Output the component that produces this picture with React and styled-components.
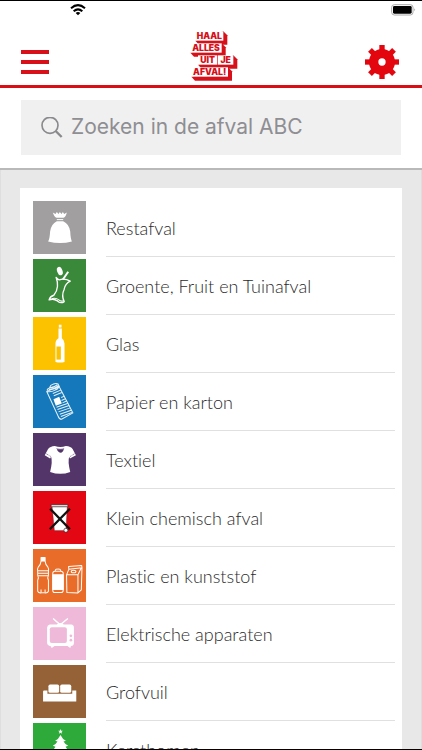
import { useState } from 'react';
import styled, { createGlobalStyle } from 'styled-components';

const GlobalStyle = createGlobalStyle`
    * {
        box-sizing: border-box;
    }

    body {
        margin: 0;
        background-color: #fff;
        font-family: Lato, 'Open Sans', sans-serif;
    }
`

const Screen = styled.div`
    display: flex;
    flex-direction: column;
    height: 100vh;
    border-top: 1px solid #000;
    border-bottom: 1px solid #000;
    overflow: hidden;
`;

const StatusBar = styled.div`
    display: flex;
    flex-shrink: 0;
    justify-content: space-between;
    padding: 3px 6px 0 70px;
`;

const Header = styled.header`
    display: grid;
    flex-shrink: 0;
    grid-template-columns: 1fr auto 1fr;
    align-items: end;
    padding: 12px 23px 4px 21px;
    border-bottom: 3px solid #d81016;
`;

const IconButton = styled.button`
    display: flex;
    align-items: center;
    justify-self: ${({ $side }) => $side};
    height: 38px;
    padding: 0;
    border: 0;
    background: none;
    color: #e3060e;
    cursor: pointer;
`;

const Bars = styled.span`
    display: flex;
    align-items: center;
    width: 28px;
    height: 24px;
    border-top: 4px solid #d8101a;
    border-bottom: 4px solid #d8101a;

    &::before {
        content: '';
        width: 100%;
        height: 4px;
        background-color: #d8101a;
    }
`;

const LogoText = styled.text`
    font-family: Inter, sans-serif;
    font-size: 26px;
    font-weight: 900;
    fill: #d8101a;
`;

const SearchBar = styled.form`
    flex-shrink: 0;
    padding: 12px 21px 13px;
    border-bottom: 2px solid #b9b9b9;
`;

const SearchField = styled.label`
    display: flex;
    align-items: center;
    gap: 8px;
    height: 55px;
    padding: 0 20px;
    background-color: #f0f0f0;
    color: #8a8a8e;
`;

const SearchInput = styled.input`
    flex: 1;
    min-width: 0;
    padding: 0 0 2px;
    border: 0;
    outline: 0;
    background: none;
    color: #333;
    font-family: Inter, sans-serif;
    font-size: 21px;

    &::placeholder {
        color: #8e8e93;
        opacity: 1;
    }
`;

const Content = styled.main`
    flex: 1;
    min-height: 0;
    padding: 18px 19px;
    border-right: 1px solid #dedede;
    border-left: 1px solid #dedede;
    background-color: #e8e8e8;
    overflow-y: auto;
    scrollbar-width: none;
`;

const List = styled.ul`
    margin: 0;
    padding: 13px 7px 13px 13px;
    background-color: #fff;
    list-style: none;
`;

const Row = styled.a`
    display: flex;
    gap: 20px;
    height: 58px;
    color: #2b2b2b;
    text-decoration: none;
`;

const Tile = styled.span`
    flex-shrink: 0;
    width: 53px;
    height: 53px;
    background-color: ${({ $color }) => $color};

    svg {
        display: block;
        width: 100%;
        height: 100%;
    }
`;

const Name = styled.span`
    flex: 1;
    height: 56px;
    border-bottom: 1px solid #e0e0e0;
    font-size: 18px;
    font-variant-ligatures: none;
    font-weight: 300;
    line-height: 54px;
`;

const Wifi = () => (
    <svg width="16" height="12" viewBox="0 0 48 36" fill="none" stroke="#000" strokeWidth="6">
        <path d="M3 13 Q24 -6 45 13" />
        <path d="M11 22 Q24 10 37 22" />
        <path d="M17 27 Q24 21 31 27 L24 34 Z" fill="#000" stroke="none" />
    </svg>
)

const Battery = () => (
    <svg width="25" height="12" viewBox="0 0 75 36">
        <rect x="2" y="2" width="64" height="31" rx="8" fill="#fff" stroke="#aaa" strokeWidth="3" />
        <rect x="6" y="6" width="56" height="23" rx="4" fill="#000" />
        <path d="M70 13 Q75 17 70 22 Z" fill="#999" />
    </svg>
)

const logoLines = [
    { text: 'HAAL', x: 76, y: 94, w: 84 },
    { text: 'ALLES', x: 61, y: 130, w: 94 },
    { text: 'UIT', x: 84, y: 166, w: 58 },
    { text: 'JE', x: 144, y: 166, w: 46 },
    { text: 'AFVAL!', x: 64, y: 202, w: 110 },
]

const Logo = () => (
    <svg width="56" height="53" viewBox="36 84 168 159" role="img" aria-label="Haal alles uit je afval!">
        {logoLines.map(({ text, x, y, w }) => (
            <g key={text}>
                <path d={`M${x} ${y + 28} L${x + 11} ${y + 40} H${x + w + 12} V${y + 12} L${x + w} ${y} Z`} fill="#d8101a" />
                <rect x={x} y={y} width={w} height="28" fill="#fff" />
                <LogoText x={x + w / 2} y={y + 23} textAnchor="middle">{text}</LogoText>
            </g>
        ))}
    </svg>
)

const Gear = () => (
    <svg width="34" height="34" viewBox="-51 -51 102 102" fill="currentColor">
        {[0, 45, 90, 135, 180, 225, 270, 315].map((angle) => (
            <path key={angle} d="M-8 -51 H8 V-34 H-8 Z" transform={`rotate(${angle})`} />
        ))}
        <path fillRule="evenodd" d="M0 -39 A39 39 0 1 1 0 39 A39 39 0 1 1 0 -39 Z M0 -11 A11 11 0 1 0 0 11 A11 11 0 1 0 0 -11 Z" />
    </svg>
)

const Magnifier = () => (
    <svg width="22" height="22" viewBox="0 0 66 66" fill="none" stroke="currentColor">
        <circle cx="27" cy="25" r="24" strokeWidth="5" />
        <path d="M44 42 L62 60" strokeWidth="7" />
    </svg>
)

const GarbageBag = () => (
    <svg viewBox="0 0 158 158" fill="#fff">
        <path d="M59 34 L67 39 L71 33 L76 39 L80 33 L85 39 L89 33 L93 39 L101 34 Q97 48 91 50 H70 Q64 48 59 34 Z" />
        <path d="M71 54 H90 V57 H71 Z" />
        <path d="M71 60 H90 Q108 68 111 91 Q112 112 116 121 Q81 130 45 121 Q50 112 51 91 Q54 68 71 60 Z" />
    </svg>
)

const AppleCore = () => (
    <svg viewBox="0 0 158 158" fill="none" stroke="#fff" strokeWidth="4" strokeLinejoin="round">
        <ellipse cx="80" cy="36" rx="8" ry="13" fill="#fff" stroke="none" transform="rotate(-20 80 36)" />
        <path d="M89 61 L105 38" strokeWidth="6" />
        <path d="M69 55 Q75 65 84 61 Q96 58 111 66 Q96 73 93 90 Q84 109 93 127 Q83 134 73 125 Q61 117 48 122 Q51 111 62 108 Q72 96 73 81 Q74 68 69 55 Z" />
        <path d="M53 121 Q65 113 77 122 Q84 128 91 124" strokeWidth="3" />
    </svg>
)

const Bottle = () => (
    <svg viewBox="0 0 158 158">
        <path fill="#fff" d="M77 23 H85 V31 H77 Z M76 34 H86 V63 Q94 68 94 79 V134 Q81 138 67 134 V79 Q67 68 76 63 Z" />
        <path fill="#fcc200" d="M70 88 H83 V127 H70 Z" />
    </svg>
)

const Newspaper = () => (
    <svg viewBox="0 0 158 158" fill="none" stroke="#e6f1f8" strokeWidth="3">
        <path d="M41 49 Q53 52 66 45 Q76 42 77 33 L119 113 L85 132 Q78 132 75 123 Z" strokeLinejoin="round" />
        <path d="M43 47 Q40 43 49 39 L53 31 Q66 23 75 27 L78 34 Q73 40 61 42 Q49 45 43 49 M50 38 Q61 38 73 29 M47 43 Q61 43 76 32" />
        <path d="M59 55 L83 45 M62 62 L86 52 M85 76 L98 70 M88 83 L101 77 M70 96 L105 84 M73 103 L108 91 M76 110 L111 98 M80 117 L114 105 M83 124 L116 112 M84 67 L94 63" />
        <path d="M61 72 L78 65 L86 85 L68 92 Z" fill="#fff" stroke="none" />
    </svg>
)

const Shirt = () => (
    <svg viewBox="0 0 158 158">
        <path fill="#fff" d="M65 39 Q82 44 98 39 Q113 40 118 48 L128 66 L110 76 L108 71 Q103 84 111 116 Q82 127 51 116 Q59 85 54 71 L51 76 L35 66 L45 48 Q51 40 65 39 Z" />
        <path fill="#54356a" d="M70 45 Q82 49 93 45 Q90 59 82 59 Q73 58 70 45 Z" />
        <path fill="none" stroke="#54356a" strokeWidth="2" strokeDasharray="3 2" d="M38 61 L53 70 M111 70 L125 61" />
        <path fill="none" stroke="#fff" strokeWidth="2" d="M71 47 H92" />
    </svg>
)

const CrossedBin = () => (
    <svg viewBox="0 0 158 158">
        <path fill="#fff" stroke="#333" strokeWidth="1" d="M57 46 H102 L98 118 H64 Z" />
        <path fill="#fff" stroke="#222" strokeWidth="2" d="M54 41 H104 V47 H54 Z" />
        <path fill="none" stroke="#111" strokeWidth="7" d="M51 53 L110 114 M110 53 L50 114" />
        <circle cx="98" cy="117" r="6" fill="#fff" stroke="#222" strokeWidth="2" />
    </svg>
)

const Packaging = () => (
    <svg viewBox="0 0 158 158" fill="none" stroke="#fff" strokeWidth="3" strokeLinejoin="round">
        <path d="M24 25 H36 V34 H24 Z" fill="#fff" />
        <path d="M24 36 Q23 46 16 53 Q12 59 14 68 V79 Q18 85 14 93 V126 Q17 134 30 130 Q43 134 46 126 V93 Q42 85 46 79 V68 Q48 59 44 53 Q37 46 36 36 Z M14 65 H46 M14 72 H46 M15 80 H45 M24 130 V121 M36 130 V121" />
        <path d="M59 72 Q59 66 65 66 H83 Q90 66 90 72 V123 Q90 130 83 130 H65 Q59 130 59 123 Z" />
        <path d="M59 77 H90 V121 H59 Z" fill="#fff" />
        <path d="M66 65 Q67 59 74 60 Q82 59 83 65" />
        <path d="M106 52 L145 49 L146 56 L107 60 Z M107 60 L100 77 L101 130 L134 131 L144 122 L146 56 M100 77 H134 V131 M134 77 L144 56" />
        <ellipse cx="121" cy="67" rx="7" ry="4" />
    </svg>
)

const Television = () => (
    <svg viewBox="0 0 158 158">
        <path fill="none" stroke="#fff" strokeWidth="4" d="M60 34 L81 53 L104 34" />
        <path fill="#fff" d="M70 53 Q81 43 93 53 Z M50 52 H114 Q122 53 122 61 V107 Q122 116 113 116 L111 122 L103 116 H64 L56 122 L52 116 Q43 115 42 107 V61 Q43 53 50 52 Z" />
        <rect x="50" y="60" width="51" height="47" rx="6" fill="#efbada" />
        <circle cx="113" cy="86" r="4" fill="#efbada" />
        <circle cx="113" cy="99" r="4" fill="#efbada" />
    </svg>
)

const Sofa = () => (
    <svg viewBox="0 0 158 158" fill="#fff">
        <rect x="46" y="58" width="32" height="25" rx="5" />
        <rect x="81" y="58" width="33" height="25" rx="5" />
        <path d="M33 76 H43 V86 H117 V76 H129 V109 H30 V79 Q30 76 33 76 Z" />
    </svg>
)

const ChristmasTree = () => (
    <svg viewBox="0 0 158 158" fill="#fff">
        <path d="M82 18 L84 23 L89 23 L85 27 L87 32 L82 29 L77 32 L79 27 L75 23 L80 23 Z" />
        <path d="M82 36 Q88 49 98 53 L91 55 Q97 65 105 68 L97 71 Q103 83 113 88 L103 92 Q111 107 123 112 H88 V126 H76 V112 H41 Q53 107 61 92 L51 88 Q61 83 67 71 L59 68 Q67 65 73 55 L66 53 Q76 49 82 36 Z" />
    </svg>
)

const categories = [
    { name: 'Restafval', color: '#a19f9f', Icon: GarbageBag },
    { name: 'Groente, Fruit en Tuinafval', color: '#3a883a', Icon: AppleCore },
    { name: 'Glas', color: '#fcc200', Icon: Bottle },
    { name: 'Papier en karton', color: '#1478bb', Icon: Newspaper },
    { name: 'Textiel', color: '#54356a', Icon: Shirt },
    { name: 'Klein chemisch afval', color: '#e30613', Icon: CrossedBin },
    { name: 'Plastic en kunststof', color: '#e96d28', Icon: Packaging },
    { name: 'Elektrische apparaten', color: '#efbada', Icon: Television },
    { name: 'Grofvuil', color: '#956237', Icon: Sofa },
    { name: 'Kerstbomen', color: '#2eaa3a', Icon: ChristmasTree },
]

const App = () => {
    const [query, setQuery] = useState('')
    const visible = categories.filter(({ name }) => name.toLowerCase().includes(query.toLowerCase()))

    return (
        <Screen>
            <GlobalStyle />
            <StatusBar>
                <Wifi />
                <Battery />
            </StatusBar>
            <Header>
                <IconButton type="button" $side="start" aria-label="Menu">
                    <Bars />
                </IconButton>
                <Logo />
                <IconButton type="button" $side="end" aria-label="Instellingen">
                    <Gear />
                </IconButton>
            </Header>
            <SearchBar onSubmit={(e) => e.preventDefault()}>
                <SearchField htmlFor="search">
                    <Magnifier />
                    <SearchInput
                        id="search"
                        aria-label="Zoeken in de afval ABC"
                        placeholder="Zoeken in de afval ABC"
                        value={query}
                        onChange={(e) => setQuery(e.target.value)}
                    />
                </SearchField>
            </SearchBar>
            <Content>
                <List>
                    {visible.map(({ name, color, Icon }) => (
                        <li key={name}>
                            <Row href="#">
                                <Tile $color={color}><Icon /></Tile>
                                <Name>{name}</Name>
                            </Row>
                        </li>
                    ))}
                </List>
            </Content>
        </Screen>
    );
}

export default App;
